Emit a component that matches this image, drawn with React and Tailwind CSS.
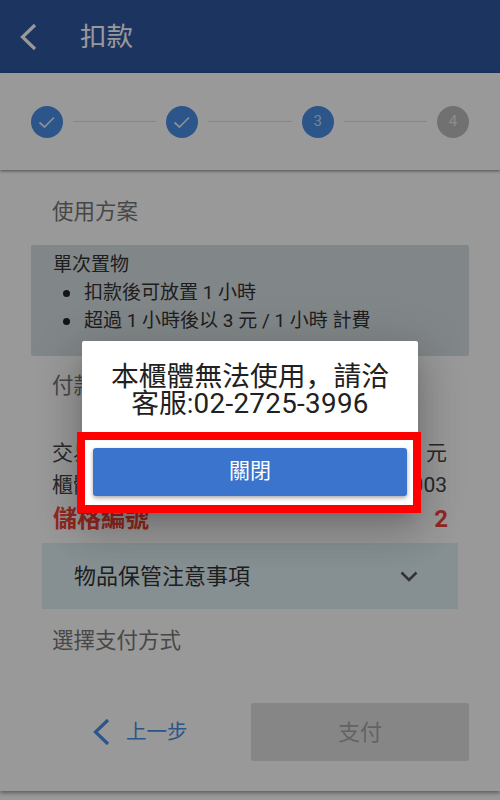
const font = "font-['Roboto','Noto_Sans_CJK_SC',sans-serif]";

function Step({ active, done, label }) {
    return (
        <div className={`flex h-[32px] w-[32px] shrink-0 items-center justify-center rounded-full text-[15px] text-white/70 ${active ? 'bg-[#4a8ee6]' : 'bg-[#bdbdbd]'}`}>
            {done ? (
                <svg width="18" height="18" viewBox="0 0 18 18" fill="none" stroke="white" strokeOpacity="0.85" strokeWidth="1.7">
                    <path d="M1.5 9.5l5 4.5L16 4.5" />
                </svg>
            ) : (
                label
            )}
        </div>
    );
}

function Line() {
    return <div className="mx-[10px] h-px flex-1 bg-[#e0e0e0]" />;
}

function BackArrow({ className }) {
    return (
        <svg className={className} width="18" height="28" viewBox="0 0 18 28" fill="none" stroke="currentColor" strokeWidth="3.2">
            <path d="M16 2L3.5 14 16 26" />
        </svg>
    );
}

function Bullet({ children }) {
    return (
        <li className="flex items-center">
            <span className="ml-[10px] mr-[14px] h-[7px] w-[7px] rounded-full bg-[#222]" />
            {children}
        </li>
    );
}

export default function App() {
    return (
        <div className={`relative h-[800px] w-[500px] overflow-hidden bg-white ${font}`}>
            <div className="flex h-[791px] flex-col bg-white shadow-[0_2px_4px_rgba(0,0,0,0.4)]">
                <header className="flex h-[73px] shrink-0 items-center bg-[#3057a1] text-white">
                    <BackArrow className="ml-[19px]" />
                    <h1 className="ml-[43px] text-[26.5px]">扣款</h1>
                </header>

                <div className="flex h-[97px] shrink-0 items-center px-[31px] shadow-[0_1px_3px_rgba(0,0,0,0.5)]">
                    <Step active done />
                    <Line />
                    <Step active done />
                    <Line />
                    <Step active label="3" />
                    <Line />
                    <Step label="4" />
                </div>

                <main className="flex-1 px-[31px]">
                    <h2 className="mt-[27px] pl-[21px] text-[21.5px] leading-[30px] text-[#777]">使用方案</h2>
                    <div className="mt-[18px] h-[111px] rounded-[2px] bg-[#d8dfe3] pl-[22px] pt-[6px] text-[19px] leading-[28px] text-[#333]">
                        <div>單次置物</div>
                        <ul>
                            <Bullet>扣款後可放置 1 小時</Bullet>
                            <Bullet>超過 1 小時後以 3 元 / 1 小時 計費</Bullet>
                        </ul>
                    </div>
                    <h2 className="mt-[15px] pl-[21px] text-[21.5px] leading-[30px] text-[#777]">付款資訊</h2>
                    <div className="mt-[36px] flex justify-between pl-[21px] pr-[22px] text-[21px] leading-[32px] text-[#444]">
                        <span>交易金額</span>
                        <span>3 元</span>
                    </div>
                    <div className="flex justify-between pl-[21px] pr-[22px] text-[21px] leading-[33px] text-[#444]">
                        <span>櫃體編號</span>
                        <span>A003</span>
                    </div>
                    <div className="flex justify-between pl-[22px] pr-[21px] text-[24px] font-bold leading-[34px] text-[#f44336]">
                        <span>儲格編號</span>
                        <span>2</span>
                    </div>
                    <div className="mx-[11px] mt-[7px] flex h-[66px] items-center justify-between bg-[#e0f0f4] pl-[32px] pr-[40px] text-[22px] text-[#333]">
                        <span>物品保管注意事項</span>
                        <svg width="18" height="11" viewBox="0 0 18 11" fill="none" stroke="#555" strokeWidth="2.6">
                            <path d="M1.5 1.5L9 9l7.5-7.5" />
                        </svg>
                    </div>
                    <h2 className="mt-[17px] pl-[21px] text-[21.5px] leading-[30px] text-[#777]">選擇支付方式</h2>
                </main>

                <footer className="mb-[30px] flex items-center px-[31px]">
                    <div className="flex w-[220px] items-center pl-[61px] text-[#4a8ee6]">
                        <BackArrow className="shrink-0" />
                        <span className="ml-[16px] text-[20.5px]">上一步</span>
                    </div>
                    <div className="flex h-[58px] flex-1 items-center justify-center rounded-[2px] bg-[#e0e0e0] text-[22px] text-[#a6a6a6]">
                        支付
                    </div>
                </footer>
            </div>

            <div className="absolute inset-0 bg-black/40" />

            <div className="absolute left-[82px] top-[341px] w-[336px] rounded-[2px] bg-white shadow-[0_11px_15px_-7px_rgba(0,0,0,0.2),0_24px_38px_3px_rgba(0,0,0,0.14),0_9px_46px_8px_rgba(0,0,0,0.12)]">
                <p className="px-[20px] pt-[22px] text-center text-[27.8px] leading-[27px] text-[#212121]">
                    本櫃體無法使用，請洽 客服:<span className="tracking-[0.3px]">02-2725-3996</span>
                </p>
                <div className="px-[11px] pb-[12px] pt-[31px]">
                    <div className="flex h-[48px] items-center justify-center rounded-[3px] bg-[#3a74cc] text-[21px] text-white shadow-[0_2px_4px_rgba(0,0,0,0.35)]">
                        關閉
                    </div>
                </div>
                <div className="absolute left-[-5px] right-[-3px] top-[91px] h-[81px] border-[8px] border-[#ff0000]" />
            </div>
        </div>
    );
}
